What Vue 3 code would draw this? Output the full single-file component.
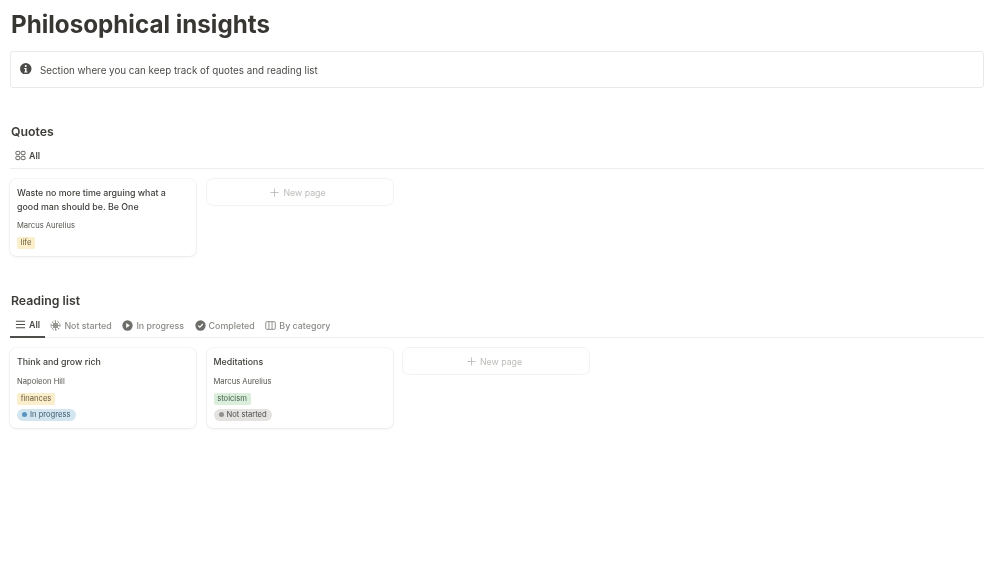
<script setup>
const quoteCards = [
  { title: 'Waste no more time arguing what a good man should be. Be One', author: 'Marcus Aurelius', tag: 'life', tagClass: 'yellow' },
]
const readingCards = [
  { title: 'Think and grow rich', author: 'Napoleon Hill', tag: 'finances', tagClass: 'yellow', status: 'In progress', statusClass: 'blue' },
  { title: 'Meditations', author: 'Marcus Aurelius', tag: 'stoicism', tagClass: 'green', status: 'Not started', statusClass: 'gray' },
]
</script>

<template>
  <main class="page">
    <h1 class="title">Philosophical insights</h1>
    <div class="callout">
      <svg class="info" viewBox="0 0 16 16" width="11.5" height="11.5">
        <circle cx="8" cy="8" r="8" fill="#4a4a48" />
        <circle cx="8" cy="4.2" r="1.5" fill="#fff" />
        <path d="M5.9 6.8h3.2v4.9h1.2v1.5H5.8v-1.5h1.2V8.3H5.9z" fill="#fff" />
      </svg>
      <span class="callout-text">Section where you can keep track of quotes and reading list</span>
    </div>

    <section class="quotes">
      <h2 class="heading">Quotes</h2>
      <div class="tabs tabs-quotes">
        <div class="tab active plain">
          <svg viewBox="0 0 12 12" width="11" height="11" fill="none" stroke="#55544f" stroke-width="1">
            <rect x="1" y="1.5" width="4.2" height="3.6" rx="1" />
            <rect x="6.8" y="1.5" width="4.2" height="3.6" rx="1" />
            <rect x="1" y="6.9" width="4.2" height="3.6" rx="1" />
            <rect x="6.8" y="6.9" width="4.2" height="3.6" rx="1" />
          </svg>
          <span>All</span>
        </div>
      </div>
      <div class="board">
        <article v-for="c in quoteCards" :key="c.title" class="card">
          <div class="card-title two-line">{{ c.title }}</div>
          <div class="author">{{ c.author }}</div>
          <div class="tag-row"><span class="tag" :class="c.tagClass">{{ c.tag }}</span></div>
        </article>
        <div class="new-page">
          <svg viewBox="0 0 10 10" width="9" height="9" stroke="#b4b4b1" stroke-width="0.9"><path d="M5 .5v9M.5 5h9" /></svg>
          <span>New page</span>
        </div>
      </div>
    </section>

    <section class="reading">
      <h2 class="heading">Reading list</h2>
      <div class="tabs">
        <div class="tab active">
          <svg viewBox="0 0 12 12" width="11" height="11" stroke="#4a4a46" stroke-width="1.1"><path d="M1 2.5h10M1 6h10M1 9.5h10" /></svg>
          <span>All</span>
        </div>
        <div class="tab">
          <svg viewBox="0 0 12 12" width="11" height="11" fill="none" stroke="#7d7d79" stroke-width="1">
            <circle cx="6" cy="6" r="2.4" />
            <circle cx="6" cy="6" r="5" stroke-dasharray="1.6 1.54" />
            <path d="M6 .8v10.4M.8 6h10.4M2.4 2.4l7.2 7.2M9.6 2.4l-7.2 7.2" stroke-width=".8" />
          </svg>
          <span>Not started</span>
        </div>
        <div class="tab">
          <svg viewBox="0 0 12 12" width="11" height="11">
            <circle cx="6" cy="6" r="5.6" fill="#6d6d69" />
            <path d="M4.6 3.4l4 2.6-4 2.6z" fill="#fff" />
          </svg>
          <span>In progress</span>
        </div>
        <div class="tab">
          <svg viewBox="0 0 12 12" width="11" height="11">
            <circle cx="6" cy="6" r="5.6" fill="#6d6d69" />
            <path d="M3.5 6.1l1.8 1.8 3.3-3.5" fill="none" stroke="#fff" stroke-width="1.3" />
          </svg>
          <span>Completed</span>
        </div>
        <div class="tab">
          <svg viewBox="0 0 12 12" width="11" height="11" fill="none" stroke="#7d7d79" stroke-width=".9">
            <rect x=".8" y="1.8" width="10.4" height="8.4" rx="1.2" />
            <path d="M4.3 1.8v8.4M7.7 1.8v8.4" />
          </svg>
          <span>By category</span>
        </div>
      </div>
      <div class="board">
        <article v-for="c in readingCards" :key="c.title" class="card">
          <div class="card-title">{{ c.title }}</div>
          <div class="author">{{ c.author }}</div>
          <div class="tag-row"><span class="tag" :class="c.tagClass">{{ c.tag }}</span></div>
          <div class="tag-row status-row">
            <span class="status" :class="c.statusClass"><i class="dot"></i>{{ c.status }}</span>
          </div>
        </article>
        <div class="new-page">
          <svg viewBox="0 0 10 10" width="9" height="9" stroke="#b4b4b1" stroke-width="0.9"><path d="M5 .5v9M.5 5h9" /></svg>
          <span>New page</span>
        </div>
      </div>
    </section>
  </main>
</template>

<style scoped>
.page {
  box-sizing: border-box;
  width: 1005px;
  height: 565px;
  padding: 10px 21px 0 10px;
  background: #fff;
  color: #37352f;
  font-family: Inter, "Liberation Sans", sans-serif;
  overflow: hidden;
  filter: blur(0.4px);
}
.title {
  margin: 0 0 0 1px;
  font-size: 24.2px;
  line-height: 30px;
  font-weight: 700;
  color: #373632;
}
.callout {
  box-sizing: border-box;
  height: 37px;
  margin-top: 11px;
  padding: 0 9px;
  display: flex;
  align-items: center;
  gap: 8.5px;
  border: 1px solid #e9e9e7;
  border-radius: 3px;
  font-size: 9.8px;
  color: #4b4a46;
}
.info { margin-top: -2px; }
.callout-text { margin-top: 1px; }
.quotes { margin-top: 35px; }
.reading { margin-top: 36px; }
.quotes .card { padding-bottom: 7px; }
.reading .board { margin-top: 10.5px; }
.reading .card { padding-bottom: 7.5px; }
.reading .author { margin-top: 7.5px; }
.heading {
  margin: 0 0 0 1px;
  font-size: 12.3px;
  line-height: 17px;
  font-weight: 600;
  color: #3d3c38;
}
.tabs {
  display: flex;
  height: 25px;
  margin-top: 4px;
  border-bottom: 1px solid #eeeeec;
  box-sizing: border-box;
  align-items: stretch;
}
.tabs-quotes { padding-bottom: 2px; }
.tab {
  display: flex;
  align-items: center;
  gap: 3px;
  padding: 0 5.3px;
  font-size: 8.85px;
  font-weight: 500;
  color: #8a8a86;
  white-space: nowrap;
  margin-bottom: -1px;
}
.tab.active {
  padding: 0 5px;
  color: #4a4a46;
  font-weight: 600;
  border-bottom: 2px solid #4f4e4a;
}
.tab.plain { border-bottom: 0; }
.board {
  display: flex;
  align-items: flex-start;
  gap: 10.5px;
  margin-top: 10px;
}
.card {
  box-sizing: border-box;
  width: 186px;
  padding: 7px 7px 8px;
  border-radius: 6px;
  background: #fff;
  box-shadow: 0 0 0 0.5px rgba(55, 53, 47, 0.08), 0 1px 3px rgba(55, 53, 47, 0.08);
}
.card-title {
  font-size: 8.85px;
  line-height: 13.5px;
  font-weight: 500;
  color: #3f3e3a;
}
.two-line { max-width: 160px; }
.author {
  margin-top: 7px;
  font-size: 7.6px;
  line-height: 12px;
  color: #55544f;
}
.tag-row {
  display: flex;
  margin-top: 4.5px;
}
.status-row { margin-top: 4px; }
.tag {
  padding: 0 3.7px;
  height: 12px;
  line-height: 12px;
  border-radius: 2px;
  font-size: 7.6px;
  color: #5f5d50;
}
.tag.yellow { background: #fbeecb; color: #6b5c3a; }
.tag.green { background: #dbeddb; color: #41624f; }
.status {
  display: inline-flex;
  align-items: center;
  gap: 3px;
  height: 12px;
  padding: 0 5.5px 0 5px;
  border-radius: 6px;
  font-size: 7.6px;
}
.status.blue { background: #d3e5ef; color: #3d5a6f; }
.status.blue .dot { background: #5b93c0; }
.status.gray { background: #e3e2e0; color: #4e4d49; }
.status.gray .dot { background: #91918e; }
.dot {
  width: 5px;
  height: 5px;
  border-radius: 50%;
}
.new-page {
  box-sizing: border-box;
  width: 186px;
  height: 26px;
  padding-right: 3px;
  display: flex;
  align-items: center;
  justify-content: center;
  gap: 4px;
  border-radius: 6px;
  box-shadow: 0 0 0 1px #f3f3f1;
  font-size: 8.8px;
  color: #bcbcb9;
}
</style>
